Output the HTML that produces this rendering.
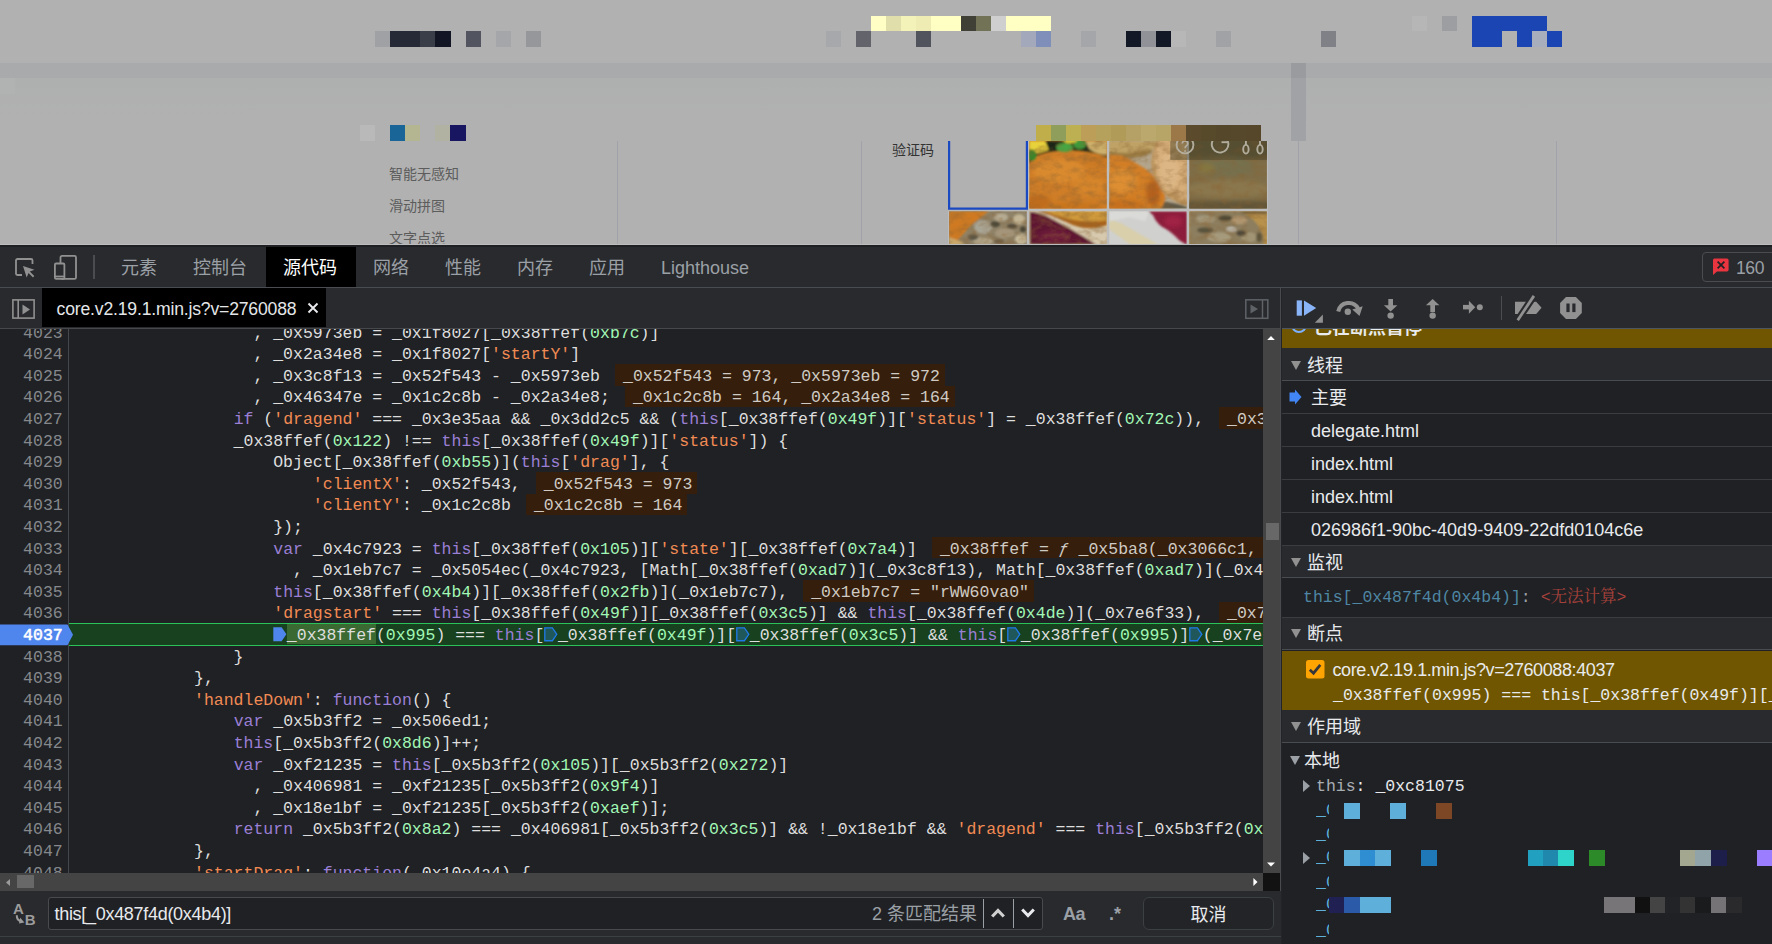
<!DOCTYPE html>
<html lang="zh-CN"><head><meta charset="utf-8"><title>DevTools</title>
<style>
*{box-sizing:border-box}
html,body{margin:0;padding:0}
body{width:1772px;height:944px;position:relative;overflow:hidden;background:#b1b1b1;font-family:"Liberation Sans","Noto Sans CJK SC",sans-serif}
.a{position:absolute}
#dt{position:absolute;left:0;top:245px;width:1772px;height:699px;background:#292a2d}
.tab{position:absolute;top:3px;height:40px;line-height:40px;font-size:18px;color:#9aa0a6;white-space:nowrap}
.mono{font-family:"Liberation Mono",monospace}
#code{position:absolute;left:0;top:84px;width:1263px;height:544px;background:#202124;overflow:hidden}
#gut{position:absolute;left:0;top:0;width:69px;height:544px;border-right:1px solid #44474b;background:#202124;z-index:2}
.ln{position:absolute;z-index:3;left:0;width:62.7px;padding-top:1.8px;text-align:right;font:16.5px/21.6px "Liberation Mono",monospace;color:#85888c;height:21.6px}
.cl{position:absolute;left:75.2px;padding-top:1.8px;white-space:pre;font:16.5px/21.6px "Liberation Mono",monospace;color:#dedede;height:21.6px}
.k{color:#9a7fd5}.s{color:#f28b54}.n{color:#a1f7b5}
.iv{display:inline-block;vertical-align:top;height:21.6px;margin:-1.8px 0 0 15px;padding:1.8px 5px 0 8px;line-height:21.6px;background:#351e0c;color:#cfcbc4}
.bm{display:inline-block;width:13.6px;height:21.6px;vertical-align:top;position:relative;margin-top:-1.8px}
.hl{background:#3a6a32;display:inline-block;vertical-align:top;height:20.2px;margin-top:-1.1px;padding-top:1.1px;line-height:21.6px}
#rp{position:absolute;left:1282px;top:84px;width:490px;height:615px;background:#202124;overflow:hidden}
.hd{position:absolute;left:0;width:490px;background:#292a2d;border-bottom:1px solid #494c50;color:#e8eaed;font-size:18px}
.hd span{position:absolute;left:25px;top:0}
.hd i{position:absolute;left:8.5px;width:0;height:0;border-left:5.2px solid transparent;border-right:5.2px solid transparent;border-top:9.2px solid #919191}
.row{position:absolute;left:0;width:490px;height:33px;border-bottom:1px solid #3a3c40;color:#e8eaed;font-size:18px;line-height:34.5px;padding-left:29px;white-space:nowrap}
.mb{position:absolute;height:16px}
</style></head><body>
<div style="position:absolute;left:0px;top:63px;width:1772px;height:15px;background:#a9aaac;"></div>
<div style="position:absolute;left:0;top:78px;width:1772px;height:50px;background:linear-gradient(#aeb0af,#b1b1b1)"></div>
<div style="position:absolute;left:0px;top:78px;width:15px;height:16px;background:#b1b3b2;"></div>
<div style="position:absolute;left:1291px;top:63px;width:15px;height:78px;background:#a1a2a5;"></div>
<div style="position:absolute;left:1291px;top:63px;width:15px;height:15px;background:#9a9b9f;"></div>
<div style="position:absolute;left:617px;top:141px;width:1px;height:104px;background:#a1a2aa;"></div>
<div style="position:absolute;left:861px;top:141px;width:1px;height:104px;background:#a1a2aa;"></div>
<div style="position:absolute;left:1298px;top:141px;width:1px;height:104px;background:#a1a2aa;"></div>
<div style="position:absolute;left:1556px;top:141px;width:1px;height:104px;background:#a1a2aa;"></div>
<div style="position:absolute;left:871px;top:16px;width:15px;height:15px;background:#ffffc5;"></div>
<div style="position:absolute;left:886px;top:16px;width:15px;height:15px;background:#e0deaa;"></div>
<div style="position:absolute;left:901px;top:16px;width:15px;height:15px;background:#f3f2b8;"></div>
<div style="position:absolute;left:916px;top:16px;width:15px;height:15px;background:#eeecb3;"></div>
<div style="position:absolute;left:931px;top:16px;width:15px;height:15px;background:#ffffc4;"></div>
<div style="position:absolute;left:946px;top:16px;width:15px;height:15px;background:#ffffc4;"></div>
<div style="position:absolute;left:961px;top:16px;width:15px;height:15px;background:#414037;"></div>
<div style="position:absolute;left:976px;top:16px;width:15px;height:15px;background:#727257;"></div>
<div style="position:absolute;left:991px;top:16px;width:15px;height:15px;background:#cfcfcf;"></div>
<div style="position:absolute;left:1006px;top:16px;width:15px;height:15px;background:#ffffc4;"></div>
<div style="position:absolute;left:1021px;top:16px;width:15px;height:15px;background:#ffffc4;"></div>
<div style="position:absolute;left:1036px;top:16px;width:15px;height:15px;background:#ffffc4;"></div>
<div style="position:absolute;left:1412px;top:16px;width:15px;height:15px;background:#b6b6b7;"></div>
<div style="position:absolute;left:1442px;top:16px;width:15px;height:15px;background:#9d9ea1;"></div>
<div style="position:absolute;left:1472px;top:16px;width:15px;height:15px;background:#1c45b4;"></div>
<div style="position:absolute;left:1487px;top:16px;width:15px;height:15px;background:#1c45b4;"></div>
<div style="position:absolute;left:1502px;top:16px;width:15px;height:15px;background:#1c45b4;"></div>
<div style="position:absolute;left:1517px;top:16px;width:15px;height:15px;background:#1c45b4;"></div>
<div style="position:absolute;left:1532px;top:16px;width:15px;height:15px;background:#1c45b4;"></div>
<div style="position:absolute;left:375px;top:31px;width:15px;height:16px;background:#a0a1a4;"></div>
<div style="position:absolute;left:390px;top:31px;width:15px;height:16px;background:#262a36;"></div>
<div style="position:absolute;left:405px;top:31px;width:15px;height:16px;background:#262a36;"></div>
<div style="position:absolute;left:420px;top:31px;width:15px;height:16px;background:#3a3e49;"></div>
<div style="position:absolute;left:435px;top:31px;width:16px;height:16px;background:#121624;"></div>
<div style="position:absolute;left:466px;top:31px;width:15px;height:16px;background:#52555f;"></div>
<div style="position:absolute;left:496px;top:31px;width:15px;height:16px;background:#a5a6a9;"></div>
<div style="position:absolute;left:526px;top:31px;width:15px;height:16px;background:#96979a;"></div>
<div style="position:absolute;left:826px;top:31px;width:15px;height:16px;background:#a7a8ab;"></div>
<div style="position:absolute;left:856px;top:31px;width:15px;height:16px;background:#62636b;"></div>
<div style="position:absolute;left:916px;top:31px;width:15px;height:16px;background:#51545d;"></div>
<div style="position:absolute;left:1021px;top:31px;width:15px;height:16px;background:#a3a9bb;"></div>
<div style="position:absolute;left:1036px;top:31px;width:15px;height:16px;background:#7f8fba;"></div>
<div style="position:absolute;left:1081px;top:31px;width:15px;height:16px;background:#a5a6a9;"></div>
<div style="position:absolute;left:1126px;top:31px;width:15px;height:16px;background:#131826;"></div>
<div style="position:absolute;left:1141px;top:31px;width:15px;height:16px;background:#919297;"></div>
<div style="position:absolute;left:1156px;top:31px;width:15px;height:16px;background:#131826;"></div>
<div style="position:absolute;left:1171px;top:31px;width:15px;height:16px;background:#b7b7b8;"></div>
<div style="position:absolute;left:1216px;top:31px;width:15px;height:16px;background:#a1a2a5;"></div>
<div style="position:absolute;left:1321px;top:31px;width:15px;height:16px;background:#808186;"></div>
<div style="position:absolute;left:1472px;top:31px;width:15px;height:16px;background:#1c45b4;"></div>
<div style="position:absolute;left:1487px;top:31px;width:15px;height:16px;background:#1c45b4;"></div>
<div style="position:absolute;left:1517px;top:31px;width:15px;height:16px;background:#1c45b4;"></div>
<div style="position:absolute;left:1532px;top:31px;width:15px;height:16px;background:#a9aebc;"></div>
<div style="position:absolute;left:1547px;top:31px;width:15px;height:16px;background:#1c45b4;"></div>
<div style="position:absolute;left:360px;top:125px;width:15px;height:16px;background:#b9b9b9;"></div>
<div style="position:absolute;left:390px;top:125px;width:15px;height:16px;background:#1a6598;"></div>
<div style="position:absolute;left:405px;top:125px;width:15px;height:16px;background:#b4b691;"></div>
<div style="position:absolute;left:435px;top:125px;width:15px;height:16px;background:#b1b2a1;"></div>
<div style="position:absolute;left:450px;top:125px;width:16px;height:16px;background:#181661;"></div>
<div style="position:absolute;left:1036px;top:125px;width:15px;height:16px;background:#bfae4a;"></div>
<div style="position:absolute;left:1051px;top:125px;width:15px;height:16px;background:#8f9e5b;"></div>
<div style="position:absolute;left:1066px;top:125px;width:15px;height:16px;background:#bcb052;"></div>
<div style="position:absolute;left:1081px;top:125px;width:15px;height:16px;background:#bd9e58;"></div>
<div style="position:absolute;left:1096px;top:125px;width:15px;height:16px;background:#b5a05c;"></div>
<div style="position:absolute;left:1111px;top:125px;width:15px;height:16px;background:#b09c58;"></div>
<div style="position:absolute;left:1126px;top:125px;width:15px;height:16px;background:#b5a165;"></div>
<div style="position:absolute;left:1141px;top:125px;width:15px;height:16px;background:#baa86c;"></div>
<div style="position:absolute;left:1156px;top:125px;width:15px;height:16px;background:#b6a566;"></div>
<div style="position:absolute;left:1171px;top:125px;width:15px;height:16px;background:#9c7849;"></div>
<div style="position:absolute;left:1186px;top:125px;width:15px;height:16px;background:#5b4a2c;"></div>
<div style="position:absolute;left:1201px;top:125px;width:15px;height:16px;background:#564a2b;"></div>
<div style="position:absolute;left:1216px;top:125px;width:15px;height:16px;background:#554729;"></div>
<div style="position:absolute;left:1231px;top:125px;width:15px;height:16px;background:#56482a;"></div>
<div style="position:absolute;left:1246px;top:125px;width:15px;height:16px;background:#57472a;"></div>
<div style="position:absolute;font:14px/20px 'Liberation Sans','Noto Sans CJK SC',sans-serif;white-space:nowrap;left:389px;top:164px;color:#5c5c5c">智能无感知</div>
<div style="position:absolute;font:14px/20px 'Liberation Sans','Noto Sans CJK SC',sans-serif;white-space:nowrap;left:389px;top:196px;color:#5c5c5c">滑动拼图</div>
<div style="position:absolute;font:14px/20px 'Liberation Sans','Noto Sans CJK SC',sans-serif;white-space:nowrap;left:389px;top:228px;color:#5c5c5c">文字点选</div>
<div style="position:absolute;font:14px/20px 'Liberation Sans','Noto Sans CJK SC',sans-serif;white-space:nowrap;left:892px;top:140px;color:#333">验证码</div>
<svg style="position:absolute;left:948px;top:141px" width="320" height="104" viewBox="0 0 320 104"><defs><filter id="b1" x="-10%" y="-10%" width="120%" height="120%"><feGaussianBlur stdDeviation="0.9"/></filter><filter id="b2" x="-10%" y="-10%" width="120%" height="120%"><feGaussianBlur stdDeviation="2.2"/></filter><filter id="nzd" x="0" y="0" width="100%" height="100%"><feTurbulence type="fractalNoise" baseFrequency="0.09 0.14" numOctaves="3" seed="7"/><feColorMatrix values="0 0 0 0 0.25  0 0 0 0 0.12  0 0 0 0 0.03  0 0 0 1.0 -0.40"/></filter><filter id="nzl" x="0" y="0" width="100%" height="100%"><feTurbulence type="fractalNoise" baseFrequency="0.14" numOctaves="2" seed="21"/><feColorMatrix values="0 0 0 0 1  0 0 0 0 0.85  0 0 0 0 0.55  0 0 0 0.9 -0.42"/></filter><filter id="b0" x="-10%" y="-10%" width="120%" height="120%"><feGaussianBlur stdDeviation="0.5"/></filter><clipPath id="c0"><rect x="81.2" y="0" width="77.6" height="67.6"/></clipPath><clipPath id="c1"><rect x="161.2" y="0" width="77.6" height="67.6"/></clipPath><clipPath id="c2"><rect x="241.2" y="0" width="77.7" height="67.6"/></clipPath><clipPath id="c3"><rect x="1.0" y="70.2" width="77.8" height="33.8"/></clipPath><clipPath id="c4"><rect x="81.2" y="70.2" width="77.6" height="33.8"/></clipPath><clipPath id="c5"><rect x="161.2" y="70.2" width="77.6" height="33.8"/></clipPath><clipPath id="c6"><rect x="241.2" y="70.2" width="77.7" height="33.8"/></clipPath><clipPath id="call"><rect x="81.2" y="0" width="77.6" height="67.6"/><rect x="161.2" y="0" width="77.6" height="67.6"/><rect x="241.2" y="0" width="77.7" height="67.6"/><rect x="1.0" y="70.2" width="77.8" height="33.8"/><rect x="81.2" y="70.2" width="77.6" height="33.8"/><rect x="241.2" y="70.2" width="77.7" height="33.8"/></clipPath></defs><rect x="0" y="0" width="320" height="104" fill="#bdbdbd"/><rect x="0" y="0" width="80" height="69.6" fill="#b1b1b1"/><path d="M1.1 0V67.600H78.900V0" fill="none" stroke="#1b49c2" stroke-width="2.200"/><g clip-path="url(#c0)"><g transform="translate(81.2,0)"><rect width="78" height="68" fill="#cf7d27"/><g filter="url(#b2)"><ellipse cx="30" cy="30" rx="26" ry="12" fill="#da8a2e"/><ellipse cx="60" cy="45" rx="16" ry="10" fill="#d6852b"/><ellipse cx="8" cy="62" rx="14" ry="8" fill="#bf6c1c"/><ellipse cx="45" cy="66" rx="30" ry="5" fill="#c8741f"/><ellipse cx="70" cy="20" rx="10" ry="6" fill="#c97820"/></g><g filter="url(#b1)"><path d="M0 0H78V16Q60 9 40 9Q20 9 6 15L0 22Z" fill="#1f2813"/><path d="M0 0H16L19.500 9L8 12.500L0 8Z" fill="#e7d23a"/><ellipse cx="35.500" cy="6.500" rx="8.500" ry="4.600" fill="#47a543"/><ellipse cx="50.500" cy="3.500" rx="6.500" ry="4.500" fill="#3d9a3a"/><ellipse cx="41" cy="-1" rx="7" ry="3.500" fill="#d8c838"/><ellipse cx="3" cy="14" rx="4.200" ry="5.500" fill="#2f8a2c"/><path d="M56 0H78V14Q68 14 60 8Z" fill="#cdb06c"/></g></g></g><g clip-path="url(#c1)"><g transform="translate(161.2,0)"><rect width="78" height="68" fill="#b3a58c"/><g filter="url(#b1)"><path d="M0 0H52Q44 7 42 10Q30 17 18 16L0 15Z" fill="#bfa265"/><path d="M0 10Q20 15 42 8L43 12Q28 19 16 17L0 15.500Z" fill="#8f7038" opacity=".75"/><path d="M40 68L52 60Q66 62 78 66V68Z" fill="#5e5844"/><path d="M46 34Q54 46 62 56Q70 64 78 64V50Z" fill="#6e5230"/><path d="M0 14L10 14.300Q18 16 24 20.500Q32 25 36.500 28Q43 33 46.800 37.400Q52 43 53.400 48.700Q57 55 56 58Q55 63 52.500 67L52 68H0Z" fill="#d27e28"/><ellipse cx="86" cy="22" rx="44" ry="43" fill="#c39a62"/><ellipse cx="89" cy="19" rx="44" ry="41" fill="#d6ae7a"/></g><g filter="url(#b2)"><ellipse cx="12" cy="40" rx="16" ry="12" fill="#dd8e32"/><ellipse cx="44" cy="52" rx="7" ry="13" fill="#b5601a"/><ellipse cx="14" cy="64" rx="22" ry="5" fill="#c6701e"/><ellipse cx="60" cy="30" rx="10" ry="20" fill="#dcb684"/></g></g></g><g clip-path="url(#c2)"><g transform="translate(241.2,0)"><rect width="78" height="68" fill="#7e6d47"/><g filter="url(#b2)"><rect x="-5" y="-5" width="90" height="22" fill="#62583a"/><ellipse cx="36" cy="25" rx="31" ry="10" fill="#76704e"/><ellipse cx="17" cy="27" rx="9" ry="5" fill="#85763f"/><ellipse cx="40" cy="48" rx="42" ry="9" fill="#8a774e"/><rect x="-5" y="60" width="90" height="12" fill="#625537"/></g></g></g><g clip-path="url(#c3)"><g transform="translate(1.0,70.2)"><rect width="78" height="34" fill="#8e8268"/><g filter="url(#b1)"><path d="M0 0H40L22 14L8 30L0 32Z" fill="#cf7a22"/><path d="M0 26L12 30L16 34H0Z" fill="#c9a86a"/><ellipse cx="34" cy="16" rx="9" ry="7" fill="#a9a595"/><ellipse cx="52" cy="6" rx="7" ry="4" fill="#b5ab92"/><ellipse cx="70" cy="8" rx="6" ry="5" fill="#c2b595"/><ellipse cx="56" cy="22" rx="10" ry="5" fill="#a4957a"/><ellipse cx="72" cy="28" rx="6" ry="5" fill="#c8bc9e"/><ellipse cx="34" cy="30" rx="10" ry="4" fill="#b0a488"/><ellipse cx="46" cy="13" rx="5" ry="3" fill="#4e4838"/><ellipse cx="63" cy="15" rx="5" ry="2.500" fill="#554c3a"/><ellipse cx="24" cy="26" rx="5" ry="3" fill="#5a5444"/><ellipse cx="74" cy="18" rx="3" ry="3" fill="#4a4436"/><ellipse cx="50" cy="30" rx="5" ry="2" fill="#6a5c44"/></g></g></g><g clip-path="url(#c4)"><g transform="translate(81.2,70.2)"><rect width="78" height="34" fill="#d6c9ae"/><g filter="url(#b1)"><path d="M10 0H78V14Q60 20 44 14Q28 6 10 0Z" fill="#a8641e"/><path d="M14 0H78V9Q60 12 40 8Z" fill="#d09a3a"/><path d="M0 0Q12 1 22 7Q40 16 56 26Q64 31 68 34H0Z" fill="#5e1530" stroke="#c8b898" stroke-width="1.200"/></g><g filter="url(#b2)"><ellipse cx="25" cy="25" rx="16" ry="6" fill="#6e1a3a"/></g></g></g><g clip-path="url(#c5)"><g transform="translate(161.2,70.2)"><rect width="78" height="34" fill="#d0d0ce"/><g filter="url(#b1)"><path d="M0 8L12 12L50 34H22L0 18Z" fill="#d9cfaa"/><path d="M0 0H40L36 10L20 6L0 10Z" fill="#dadad8"/><path d="M39 0H78V34L70 29Q62 20 52 15Q46 10 44 4Z" fill="#8c1d3a"/></g><g filter="url(#b2)"><ellipse cx="64" cy="10" rx="9" ry="6" fill="#a02444"/></g></g></g><g clip-path="url(#c6)"><g transform="translate(241.2,70.2)"><rect width="78" height="34" fill="#b8924c"/><g filter="url(#b1)"><rect x="0" y="0" width="78" height="2.500" fill="#6a5838"/><path d="M0 0H50Q66 6 72 20Q76 28 74 34H0Z" fill="#8c7e5e"/><ellipse cx="16" cy="8" rx="10" ry="4" fill="#a2977a"/><ellipse cx="50" cy="9" rx="8" ry="4" fill="#b09670"/><ellipse cx="30" cy="26" rx="12" ry="5" fill="#a59a7c"/><ellipse cx="60" cy="26" rx="8" ry="5" fill="#a09474"/><ellipse cx="36" cy="7" rx="7" ry="3" fill="#4e4836"/><ellipse cx="16" cy="19" rx="8" ry="3" fill="#5a523e"/><ellipse cx="42" cy="18" rx="5" ry="2.500" fill="#c0c0b8"/><ellipse cx="52" cy="22" rx="5" ry="3" fill="#50483a"/><ellipse cx="70" cy="26" rx="3" ry="5" fill="#5c543e"/></g></g></g><g clip-path="url(#call)"><rect x="0" y="0" width="320" height="104" filter="url(#nzd)"/></g><rect x="222.300" y="0" width="96.700" height="18.900" fill="#4a4228" fill-opacity=".48"/><g fill="none" stroke="#b6b1a2" stroke-width="1.900" stroke-opacity=".95"><circle cx="237" cy="4" r="8.400"/><path d="M234.300 2.500a2.700 2.700 0 1 1 4 2.400q-1.200 .800-1.200 2.300" stroke-width="1.700"/><path d="M237.100 9.300v1.500" stroke-width="1.900"/><path d="M278 -2.500A8.300 8.300 0 1 1 265 -1"/><path d="M273.500 1.200H279.500"/><ellipse cx="297.900" cy="8.200" rx="2.700" ry="4.300"/><path d="M297.900 3.900V0"/><ellipse cx="312" cy="8.200" rx="2.700" ry="4.300"/><path d="M312 3.900V0"/></g></svg>
<div id="dt">
<div class="a" style="left:0;top:-1px;width:1772px;height:1px;background:#bcbcbc"></div><div class="a" style="left:0;top:0;width:1772px;height:2px;background:#1f2023"></div>
<div class="a" style="left:0;top:42px;width:1772px;height:1px;background:#494c50"></div>
<svg class="a" style="left:13px;top:11px" width="24" height="24" viewBox="0 0 24 24"><path d="M9 19H4.5A1.5 1.5 0 0 1 3 17.5V4.5A1.5 1.5 0 0 1 4.5 3H18A1.5 1.5 0 0 1 19.500 4.5V8" fill="none" stroke="#919191" stroke-width="1.8"/><path d="M10 10L21.5 13.8L16.8 15.6L21.3 20.1L20 21.4L15.5 16.9L13.700 21.5Z" fill="#919191"/></svg>
<svg class="a" style="left:53px;top:9px" width="26" height="27" viewBox="0 0 26 27"><rect x="7.5" y="1.900" width="15.5" height="23" rx="1.5" fill="none" stroke="#919191" stroke-width="1.8"/><rect x="1.900" y="9.5" width="9.5" height="15.400" rx="1.2" fill="#292a2d" stroke="#919191" stroke-width="1.8"/><path d="M2 22.5H11.400" stroke="#919191" stroke-width="1.800"/></svg>
<div class="a" style="left:93px;top:10px;width:2px;height:24px;background:#4a4c50"></div>
<div class="a" style="left:266px;top:2px;width:90px;height:40px;background:#000"></div>
<div class="tab" style="left:121px;">元素</div>
<div class="tab" style="left:193px;">控制台</div>
<div class="tab" style="left:283px;color:#fff;">源代码</div>
<div class="tab" style="left:373px;">网络</div>
<div class="tab" style="left:445px;">性能</div>
<div class="tab" style="left:517px;">内存</div>
<div class="tab" style="left:589px;">应用</div>
<div class="tab" style="left:661px;">Lighthouse</div>
<div class="a" style="left:1702px;top:7px;width:90px;height:30px;border:1px solid #4a4c50;border-radius:4px"></div>
<svg class="a" style="left:1712px;top:13px" width="18" height="18" viewBox="0 0 18 18"><path d="M2.5 0.600H15A1.6 1.6 0 0 1 16.600 2.200V11.800A1.6 1.6 0 0 1 15 13.400H5L1 17V2.200A1.600 1.600 0 0 1 2.500 0.600Z" fill="#e8353f"/><path d="M5.600 3.600L12.400 10.400M12.400 3.600L5.600 10.400" stroke="#202124" stroke-width="1.700"/></svg>
<div class="a" style="left:1736px;top:8px;height:30px;line-height:31.500px;font-size:17.500px;color:#9aa0a6;letter-spacing:-0.400px">160</div>
<div class="a" style="left:0;top:83px;width:1281px;height:1px;background:#46484c"></div>
<svg class="a" style="left:11px;top:53px" width="26" height="23" viewBox="0 0 26 23"><rect x="1.900" y="1.900" width="21.200" height="18.200" fill="none" stroke="#919191" stroke-width="1.600"/><path d="M7.200 2V20" stroke="#919191" stroke-width="1.600"/><path d="M11.500 6.500L19 11.500L11.500 16.500Z" fill="#919191"/></svg>
<div class="a" style="left:42px;top:43px;width:284px;height:39px;background:#000"></div>
<div class="a" style="left:56.600px;top:44px;height:38px;line-height:40.500px;font-size:17.600px;color:#e4e6e9;white-space:nowrap;letter-spacing:-0.180px" id="ftab">core.v2.19.1.min.js?v=2760088</div>
<svg class="a" style="left:306px;top:56px" width="14" height="14" viewBox="0 0 14 14"><path d="M2.500 2.500L11.500 11.500M11.500 2.500L2.500 11.500" stroke="#e8eaed" stroke-width="1.900"/></svg>
<svg class="a" style="left:1244px;top:53px" width="26" height="23" viewBox="0 0 26 23"><rect x="1.800" y="1.800" width="22" height="18.500" fill="none" stroke="#5f6368" stroke-width="1.500"/><path d="M18.500 2V20" stroke="#5f6368" stroke-width="1.500"/><path d="M6.500 6.500L14 11L6.500 15.500Z" fill="#5f6368"/></svg>
<div class="a" style="left:1280px;top:43px;width:1px;height:656px;background:#484a4e"></div><div class="a" style="left:1281px;top:43px;width:1px;height:656px;background:#232428"></div>
<div id="code"><div class="a" style="left:69px;top:294.3px;width:1194px;height:22.8px;background:#17411f;border-top:1.4px solid #2cc25a;border-bottom:1.4px solid #2cc25a"></div>
<div class="cl" style="top:-8.1px">                  , _0x5973eb = _0x1f8027[_0x38ffef(<span class="n">0xb7c</span>)]</div>
<div class="cl" style="top:13.5px">                  , _0x2a34e8 = _0x1f8027[<span class="s">'startY'</span>]</div>
<div class="cl" style="top:35.1px">                  , _0x3c8f13 = _0x52f543 - _0x5973eb<span class="iv">_0x52f543 = 973, _0x5973eb = 972</span></div>
<div class="cl" style="top:56.7px">                  , _0x46347e = _0x1c2c8b - _0x2a34e8;<span class="iv">_0x1c2c8b = 164, _0x2a34e8 = 164</span></div>
<div class="cl" style="top:78.3px">                <span class="k">if</span> (<span class="s">'dragend'</span> === _0x3e35aa &amp;&amp; _0x3dd2c5 &amp;&amp; (<span class="k">this</span>[_0x38ffef(<span class="n">0x49f</span>)][<span class="s">'status'</span>] = _0x38ffef(<span class="n">0x72c</span>)),<span class="iv">_0x3e35aa = "dragend", _0x3dd2c5 = true</span></div>
<div class="cl" style="top:99.9px">                _0x38ffef(<span class="n">0x122</span>) !== <span class="k">this</span>[_0x38ffef(<span class="n">0x49f</span>)][<span class="s">'status'</span>]) {</div>
<div class="cl" style="top:121.5px">                    Object[_0x38ffef(<span class="n">0xb55</span>)](<span class="k">this</span>[<span class="s">'drag'</span>], {</div>
<div class="cl" style="top:143.1px">                        <span class="s">'clientX'</span>: _0x52f543,<span class="iv">_0x52f543 = 973</span></div>
<div class="cl" style="top:164.7px">                        <span class="s">'clientY'</span>: _0x1c2c8b<span class="iv">_0x1c2c8b = 164</span></div>
<div class="cl" style="top:186.3px">                    });</div>
<div class="cl" style="top:207.9px">                    <span class="k">var</span> _0x4c7923 = <span class="k">this</span>[_0x38ffef(<span class="n">0x105</span>)][<span class="s">'state'</span>][_0x38ffef(<span class="n">0x7a4</span>)]<span class="iv">_0x38ffef = <i>ƒ</i> _0x5ba8(_0x3066c1, _0x1f6a0e)</span></div>
<div class="cl" style="top:229.5px">                      , _0x1eb7c7 = _0x5054ec(_0x4c7923, [Math[_0x38ffef(<span class="n">0xad7</span>)](_0x3c8f13), Math[_0x38ffef(<span class="n">0xad7</span>)](_0x46347e)]);</div>
<div class="cl" style="top:251.1px">                    <span class="k">this</span>[_0x38ffef(<span class="n">0x4b4</span>)][_0x38ffef(<span class="n">0x2fb</span>)](_0x1eb7c7),<span class="iv">_0x1eb7c7 = "rWW60va0"</span></div>
<div class="cl" style="top:272.7px">                    <span class="s">'dragstart'</span> === <span class="k">this</span>[_0x38ffef(<span class="n">0x49f</span>)][_0x38ffef(<span class="n">0x3c5</span>)] &amp;&amp; <span class="k">this</span>[_0x38ffef(<span class="n">0x4de</span>)](_0x7e6f33),<span class="iv">_0x7e6f33 = MouseEvent</span></div>
<div class="cl" style="top:294.3px">                    <span class="bm"><svg class="a" style="left:0;top:4px" width="14" height="14.6" viewBox="0 0 14 14" preserveAspectRatio="none"><path d="M0.3 0.3H8.6L13.4 7L8.6 13.7H0.3Z" fill="#4f86ee"/></svg></span><span class="hl">_0x38ffef</span>(<span class="n">0x995</span>) === <span class="k">this</span>[<span class="bm"><svg class="a" style="left:0;top:4px" width="14" height="14.6" viewBox="0 0 14 14" preserveAspectRatio="none"><path d="M0.8 0.8H8.4L12.8 7L8.4 13.2H0.8Z" fill="#1f575a" stroke="#1f7ae8" stroke-width="1.3"/></svg></span>_0x38ffef(<span class="n">0x49f</span>)][<span class="bm"><svg class="a" style="left:0;top:4px" width="14" height="14.6" viewBox="0 0 14 14" preserveAspectRatio="none"><path d="M0.8 0.8H8.4L12.8 7L8.4 13.2H0.8Z" fill="#1f575a" stroke="#1f7ae8" stroke-width="1.3"/></svg></span>_0x38ffef(<span class="n">0x3c5</span>)] &amp;&amp; <span class="k">this</span>[<span class="bm"><svg class="a" style="left:0;top:4px" width="14" height="14.6" viewBox="0 0 14 14" preserveAspectRatio="none"><path d="M0.8 0.8H8.4L12.8 7L8.4 13.2H0.8Z" fill="#1f575a" stroke="#1f7ae8" stroke-width="1.3"/></svg></span>_0x38ffef(<span class="n">0x995</span>)]<span class="bm"><svg class="a" style="left:0;top:4px" width="14" height="14.6" viewBox="0 0 14 14" preserveAspectRatio="none"><path d="M0.8 0.8H8.4L12.8 7L8.4 13.2H0.8Z" fill="#1f575a" stroke="#1f7ae8" stroke-width="1.3"/></svg></span>(_0x7e6f33);</div>
<div class="cl" style="top:315.9px">                }</div>
<div class="cl" style="top:337.5px">            },</div>
<div class="cl" style="top:359.1px">            <span class="s">'handleDown'</span>: <span class="k">function</span>() {</div>
<div class="cl" style="top:380.7px">                <span class="k">var</span> _0x5b3ff2 = _0x506ed1;</div>
<div class="cl" style="top:402.3px">                <span class="k">this</span>[_0x5b3ff2(<span class="n">0x8d6</span>)]++;</div>
<div class="cl" style="top:423.9px">                <span class="k">var</span> _0xf21235 = <span class="k">this</span>[_0x5b3ff2(<span class="n">0x105</span>)][_0x5b3ff2(<span class="n">0x272</span>)]</div>
<div class="cl" style="top:445.5px">                  , _0x406981 = _0xf21235[_0x5b3ff2(<span class="n">0x9f4</span>)]</div>
<div class="cl" style="top:467.1px">                  , _0x18e1bf = _0xf21235[_0x5b3ff2(<span class="n">0xaef</span>)];</div>
<div class="cl" style="top:488.7px">                <span class="k">return</span> _0x5b3ff2(<span class="n">0x8a2</span>) === _0x406981[_0x5b3ff2(<span class="n">0x3c5</span>)] &amp;&amp; !_0x18e1bf &amp;&amp; <span class="s">'dragend'</span> === <span class="k">this</span>[_0x5b3ff2(<span class="n">0x49f</span>)][<span class="s">'status'</span>];</div>
<div class="cl" style="top:510.3px">            },</div>
<div class="cl" style="top:531.9px">            <span class="s">'startDrag'</span>: <span class="k">function</span>(_0x10e4a4) {</div><div id="gut"></div><div class="ln" style="top:-8.1px">4023</div>
<div class="ln" style="top:13.5px">4024</div>
<div class="ln" style="top:35.1px">4025</div>
<div class="ln" style="top:56.7px">4026</div>
<div class="ln" style="top:78.3px">4027</div>
<div class="ln" style="top:99.9px">4028</div>
<div class="ln" style="top:121.5px">4029</div>
<div class="ln" style="top:143.1px">4030</div>
<div class="ln" style="top:164.7px">4031</div>
<div class="ln" style="top:186.3px">4032</div>
<div class="ln" style="top:207.9px">4033</div>
<div class="ln" style="top:229.5px">4034</div>
<div class="ln" style="top:251.1px">4035</div>
<div class="ln" style="top:272.7px">4036</div>
<svg class="a" style="left:0;top:295.0px;z-index:3" width="75" height="22" viewBox="0 0 75 22"><path d="M0 0.5H67.5L73 10.8L67.5 21.2H0Z" fill="#4f86ee"/></svg>
<div class="ln" style="top:294.3px;color:#fff;-webkit-text-stroke:0.55px #fff;z-index:4">4037</div>
<div class="ln" style="top:315.9px">4038</div>
<div class="ln" style="top:337.5px">4039</div>
<div class="ln" style="top:359.1px">4040</div>
<div class="ln" style="top:380.7px">4041</div>
<div class="ln" style="top:402.3px">4042</div>
<div class="ln" style="top:423.9px">4043</div>
<div class="ln" style="top:445.5px">4044</div>
<div class="ln" style="top:467.1px">4045</div>
<div class="ln" style="top:488.7px">4046</div>
<div class="ln" style="top:510.3px">4047</div>
<div class="ln" style="top:531.9px">4048</div></div>
<div class="a" style="left:1263px;top:84px;width:17px;height:544px;background:#444"></div>
<div class="a" style="left:1265.500px;top:278px;width:13px;height:17px;background:#686868"></div>
<svg class="a" style="left:1267.400px;top:90.800px" width="8" height="4.600" viewBox="0 0 11 6" preserveAspectRatio="none"><path d="M0 5.500L5.500 0L11 5.500Z" fill="#fff"/></svg>
<svg class="a" style="left:1267.400px;top:617px" width="8" height="4.600" viewBox="0 0 11 6" preserveAspectRatio="none"><path d="M0 0.500L5.500 6L11 0.500Z" fill="#fff"/></svg>
<div class="a" style="left:0;top:628px;width:1263px;height:18px;background:#444"></div>
<div class="a" style="left:1263px;top:628px;width:17px;height:18px;background:#121212"></div>
<div class="a" style="left:17px;top:630px;width:17px;height:13px;background:#686868"></div>
<svg class="a" style="left:5.500px;top:633.500px" width="4.500" height="7" viewBox="0 0 6 11" preserveAspectRatio="none"><path d="M5.500 0L0 5.500L5.500 11Z" fill="#9a9a9a"/></svg>
<svg class="a" style="left:1253px;top:633px" width="4.500" height="8" viewBox="0 0 6 11" preserveAspectRatio="none"><path d="M0.500 0L6 5.500L0.500 11Z" fill="#fff"/></svg>
<div class="a" style="left:0;top:645.500px;width:1281px;height:45.500px;background:#292a2d"></div>
<div class="a" style="left:0;top:691px;width:1281px;height:1px;background:#3c4043"></div>
<div class="a" style="left:48px;top:652px;width:995px;height:33px;background:#202124;border:1px solid #484a4e;border-radius:3px"></div>
<div class="a" style="left:54.500px;top:652px;height:33px;line-height:34px;font-size:18px;color:#e8eaed;white-space:nowrap;letter-spacing:-0.300px" id="sq">this[_0x487f4d(0x4b4)]</div>
<div class="a" style="left:13px;top:656px;font:bold 15px/16px 'Liberation Sans',sans-serif;color:#9c9c9c">A</div>
<div class="a" style="left:24.800px;top:667px;font:bold 15px/16px 'Liberation Sans',sans-serif;color:#9c9c9c">B</div>
<svg class="a" style="left:14px;top:669px" width="12" height="11" viewBox="0 0 12 11"><path d="M2.800 1.300Q2.500 7 8 7.300" fill="none" stroke="#9c9c9c" stroke-width="2"/><path d="M6.200 3.800L10.400 8.600L5 9.600Z" fill="#9c9c9c"/></svg>
<div class="a" style="left:872px;top:652px;height:33px;line-height:34px;font-size:18px;color:#9aa0a6;white-space:nowrap">2 条匹配结果</div>
<div class="a" style="left:983px;top:654px;width:1px;height:29px;background:#9aa0a6"></div>
<div class="a" style="left:1013px;top:654px;width:1px;height:29px;background:#9aa0a6"></div>
<svg class="a" style="left:990px;top:662px" width="16" height="12" viewBox="0 0 16 12"><path d="M2.200 9.500L8 3.500L13.800 9.500" fill="none" stroke="#d0d0d0" stroke-width="3.200"/></svg>
<svg class="a" style="left:1020px;top:662px" width="16" height="12" viewBox="0 0 16 12"><path d="M2.200 2.500L8 8.500L13.800 2.500" fill="none" stroke="#e8eaed" stroke-width="3"/></svg>
<div class="a" style="left:1063px;top:652px;height:33px;line-height:35px;font-size:18px;font-weight:bold;color:#9aa0a6;letter-spacing:-0.500px">Aa</div>
<div class="a" style="left:1109px;top:652px;height:33px;line-height:35px;font-size:18px;font-weight:bold;color:#9aa0a6">.*</div>
<div class="a" style="left:1143px;top:652px;width:131px;height:33px;background:#232427;border:1px solid #3c4043;border-radius:6px;text-align:center;line-height:34.500px;font-size:18px;color:#e8eaed">取消</div>
<div class="a" style="left:0;top:692px;width:1281px;height:7px;background:#292a2d"></div>
<div class="a" style="left:1282px;top:83px;width:490px;height:1px;background:#4c5560"></div>
<svg class="a" style="left:1282px;top:43px" width="490" height="40" viewBox="1282 288 490 40"><rect x="1296.700" y="300.400" width="5.200" height="15.300" fill="#8ab4f8"/><path d="M1304 300.400L1316.200 308.050L1304 315.700Z" fill="#8ab4f8"/><path d="M1322.900 314.400V322.700H1314.800Z" fill="#919191"/><path d="M1338.200 311.500A10.800 10.800 0 0 1 1358.200 308.500" fill="none" stroke="#919191" stroke-width="4"/><path d="M1352.300 309.500L1362.700 306.300L1359.500 316Z" fill="#919191"/><circle cx="1347.800" cy="311.700" r="3.200" fill="#919191"/><rect x="1388.300" y="299" width="4.700" height="7" fill="#919191"/><path d="M1383.900 305.300H1397.400L1390.650 311.400Z" fill="#919191"/><circle cx="1390.650" cy="315.600" r="3.200" fill="#919191"/><rect x="1430.300" y="304.500" width="4.700" height="7.600" fill="#919191"/><path d="M1425.900 305.300H1439.400L1432.650 299Z" fill="#919191"/><circle cx="1432.650" cy="315.600" r="3.200" fill="#919191"/><rect x="1463" y="304.900" width="6.500" height="4.500" fill="#919191"/><path d="M1468.900 300.800L1475.200 307.200L1468.900 313.700Z" fill="#919191"/><circle cx="1479.800" cy="307.200" r="3" fill="#919191"/><rect x="1501" y="296" width="1" height="24" fill="#4a4c50"/><path d="M1515 301.700H1536.200L1541.600 307.800L1536.200 313.900H1515Z" fill="#919191"/><path d="M1535.200 294L1516.400 322.200" stroke="#292a2d" stroke-width="7"/><path d="M1533.900 295.900L1517.700 320.200" stroke="#919191" stroke-width="2.800"/><path d="M1566 297H1575.900L1581.800 302.900V313L1575.900 318.900H1566L1560.100 313V302.900Z" fill="#919191"/><rect x="1566.400" y="303.500" width="3.200" height="8.600" fill="#292a2d"/><rect x="1572.300" y="303.500" width="3.200" height="8.600" fill="#292a2d"/></svg>
<div id="rp"><div class="a" style="left:0;top:0px;width:490px;height:19.200px;background:#705600;overflow:hidden"><div class="a" style="left:32px;top:-12.500px;font-size:18px;font-weight:bold;line-height:22px;color:#e8eaed;white-space:nowrap">已在断点暂停</div><div class="a" style="left:9px;top:-12px;width:16px;height:16px;border-radius:50%;border:2.600px solid #7db0ff"></div></div>
<div class="hd" style="top:19.0px;height:32.8px;line-height:37.0px"><i style="top:13.3px"></i><span>线程</span></div>
<div class="row" style="top:51.5px">主要</div>
<div class="row" style="top:84.5px">delegate.html</div>
<div class="row" style="top:117.5px">index.html</div>
<div class="row" style="top:150.5px">index.html</div>
<div class="row" style="top:183.5px">026986f1-90bc-40d9-9409-22dfd0104c6e</div>
<svg class="a" style="left:7px;top:60px" width="13" height="16" viewBox="0 0 13 16"><path d="M0.500 3.500H6V0.500L12.500 8L6 15.500V12.500H0.500Z" fill="#4285f4"/></svg>
<div class="hd" style="top:216.8px;height:32.5px;line-height:35.0px"><i style="top:12.3px"></i><span>监视</span></div>
<div class="a mono" style="left:0;top:248.5px;width:490px;height:40px;border-bottom:1px solid #3a3c40;padding-left:21px;line-height:39px;font-size:16.500px;white-space:nowrap;color:#4e86a3">this[_0x487f4d(0x4b4)]<span style="color:#9aa0a6">: </span><span style="color:#a8413c;font-family:'Liberation Mono','Noto Serif CJK SC',monospace">&lt;无法计算&gt;</span></div>
<div class="hd" style="top:289.3px;height:32.2px;line-height:32.6px"><i style="top:11.1px"></i><span>断点</span></div>
<div class="a" style="left:0;top:321.5px;width:490px;height:60px;background:#705600"></div>
<svg class="a" style="left:24px;top:331px" width="19" height="19" viewBox="0 0 19 19"><rect x="0" y="0" width="18.500" height="18.500" rx="2.500" fill="#ffa400"/><path d="M3.800 9.800L7.500 13.200L14.300 4.800" fill="none" stroke="#35363a" stroke-width="2.700"/></svg>
<div class="a" style="left:50.500px;top:327.79999999999995px;line-height:26px;font-size:18px;color:#e8eaed;white-space:nowrap;letter-spacing:-0.400px" id="bpt">core.v2.19.1.min.js?v=2760088:4037</div>
<div class="a mono" style="left:51px;top:354.79999999999995px;line-height:24px;font-size:16.500px;color:#e8eaed;white-space:pre">_0x38ffef(0x995) === this[_0x38ffef(0x49f)][_0x38ffef(0x3c5)] &amp;&amp; this</div>
<div class="hd" style="top:381.0px;height:33.2px;line-height:35.2px"><i style="top:12.4px"></i><span>作用域</span></div>
<div class="a" style="left:8px;top:427px;width:0;height:0;border-left:5.500px solid transparent;border-right:5.500px solid transparent;border-top:9px solid #9aa0a6"></div>
<div class="a" style="left:22px;top:419px;line-height:26px;font-size:18px;color:#e8eaed">本地</div>
<div class="a" style="left:21px;top:451.4px;width:0;height:0;border-top:6px solid transparent;border-bottom:6px solid transparent;border-left:7.600px solid #9aa0a6"></div>
<div class="a mono" style="left:34px;top:446.4px;line-height:24px;font-size:16.500px;color:#e8eaed;white-space:pre"><span style="color:#a8adb3">this</span>: _0xc81075</div>
<div class="a mono" style="left:34px;top:470px;width:13px;height:24px;overflow:hidden;line-height:24px;font-size:16.500px;color:#5eb0da;white-space:pre">_0x1</div>
<div class="a mono" style="left:34px;top:494px;width:13px;height:24px;overflow:hidden;line-height:24px;font-size:16.500px;color:#5eb0da;white-space:pre">_0x1</div>
<div class="a mono" style="left:34px;top:517px;width:13px;height:24px;overflow:hidden;line-height:24px;font-size:16.500px;color:#5eb0da;white-space:pre">_0x1</div>
<div class="a mono" style="left:34px;top:542px;width:13px;height:24px;overflow:hidden;line-height:24px;font-size:16.500px;color:#5eb0da;white-space:pre">_0x1</div>
<div class="a mono" style="left:34px;top:564px;width:13px;height:24px;overflow:hidden;line-height:24px;font-size:16.500px;color:#5eb0da;white-space:pre">_0x1</div>
<div class="a mono" style="left:34px;top:590px;width:13px;height:24px;overflow:hidden;line-height:24px;font-size:16.500px;color:#5eb0da;white-space:pre">_0x1</div>
<div class="a" style="left:21px;top:523.4px;width:0;height:0;border-top:6px solid transparent;border-bottom:6px solid transparent;border-left:7.600px solid #9aa0a6"></div>
<div class="mb" style="left:62px;top:474px;width:15.5px;background:#5eb0da"></div>
<div class="mb" style="left:108px;top:474px;width:15.5px;background:#5eb0da"></div>
<div class="mb" style="left:154px;top:474px;width:15.5px;background:#7d4726"></div>
<div class="mb" style="left:62px;top:521px;width:15.5px;background:#5eb0da"></div>
<div class="mb" style="left:77.5px;top:521px;width:15.5px;background:#2f8ed2"></div>
<div class="mb" style="left:93px;top:521px;width:15.5px;background:#5eb0da"></div>
<div class="mb" style="left:139px;top:521px;width:15.5px;background:#1f78b8"></div>
<div class="mb" style="left:246px;top:521px;width:15.5px;background:#22a0c0"></div>
<div class="mb" style="left:261px;top:521px;width:15.5px;background:#2088ac"></div>
<div class="mb" style="left:276px;top:521px;width:15.5px;background:#2ed3c9"></div>
<div class="mb" style="left:307px;top:521px;width:15.5px;background:#2d8a28"></div>
<div class="mb" style="left:398px;top:521px;width:15.5px;background:#a3a78f"></div>
<div class="mb" style="left:413px;top:521px;width:15.5px;background:#90a3a8"></div>
<div class="mb" style="left:429px;top:521px;width:15.5px;background:#1e1e4a"></div>
<div class="mb" style="left:475px;top:521px;width:15.5px;background:#9b7dff"></div>
<div class="mb" style="left:47px;top:568px;width:15.5px;background:#212052"></div>
<div class="mb" style="left:62px;top:568px;width:15.5px;background:#2a5aa8"></div>
<div class="mb" style="left:77.5px;top:568px;width:15.5px;background:#5eb0da"></div>
<div class="mb" style="left:93px;top:568px;width:15.5px;background:#5eb0da"></div>
<div class="mb" style="left:322px;top:568px;width:15.5px;background:#777577"></div>
<div class="mb" style="left:337.5px;top:568px;width:15.5px;background:#777577"></div>
<div class="mb" style="left:353px;top:568px;width:15.5px;background:#111"></div>
<div class="mb" style="left:368px;top:568px;width:15.5px;background:#444"></div>
<div class="mb" style="left:383px;top:568px;width:15.5px;background:#222326"></div>
<div class="mb" style="left:398px;top:568px;width:15.5px;background:#333"></div>
<div class="mb" style="left:413px;top:568px;width:15.5px;background:#1a1b1d"></div>
<div class="mb" style="left:429px;top:568px;width:15.5px;background:#757375"></div>
<div class="mb" style="left:444px;top:568px;width:15.5px;background:#2a2a2c"></div></div>
</div>
</body></html>
